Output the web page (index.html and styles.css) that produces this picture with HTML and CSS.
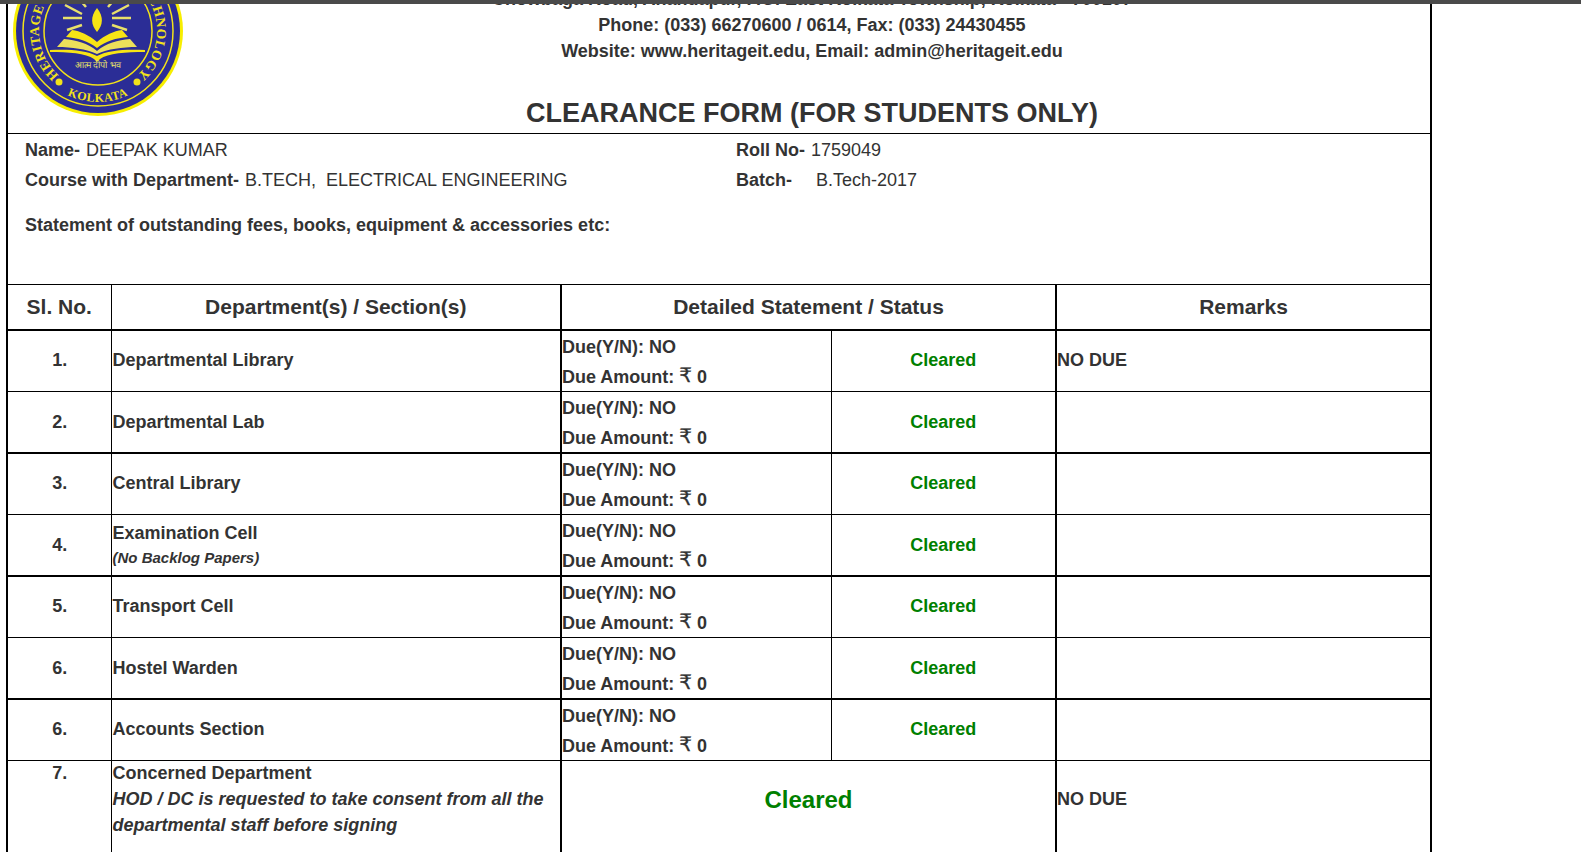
FILE: index.html
```html
<!DOCTYPE html>
<html lang="en">
<head>
  <meta charset="UTF-8">
  <title>Clearance Form</title>
  <link rel="stylesheet" href="styles.css">
</head>
<body>
  <div class="top-bar"></div>

  <div class="page">
    <!-- College header -->
    <div class="college-head">
      <svg class="logo" viewBox="0 0 172 172" width="172" height="172">
        <defs>
          <path id="ringTop" d="M 65.8 141.4 A 59 59 0 1 1 106.2 141.4"/>
          <path id="ringBottom" d="M 40.4 140.4 A 71 71 0 0 0 131.6 140.4"/>
        </defs>
        <circle cx="86" cy="86" r="85" fill="#f7ee00"/>
        <circle cx="86" cy="86" r="82" fill="#2b2d96"/>
        <circle cx="86" cy="86" r="75" fill="none" stroke="#f2e21a" stroke-width="1.5"/>
        <circle cx="86" cy="86" r="54" fill="none" stroke="#f2e21a" stroke-width="1.5"/>
        <text class="logo-ring"><textPath href="#ringTop" startOffset="50%" text-anchor="middle">HERITAGE INSTITUTE OF TECHNOLOGY</textPath></text>
        <text class="logo-city"><textPath href="#ringBottom" startOffset="50%" text-anchor="middle">KOLKATA</textPath></text>
        <circle cx="47" cy="137" r="3.5" fill="#f2e21a"/>
        <circle cx="125" cy="137" r="3.5" fill="#f2e21a"/>
        <path d="M85 63 C78 72 79 80 85 87 C91 80 92 72 85 63 Z" fill="#f7e415"/>
        <path d="M51 73 H70 M53 60 L70 69 M55 85 L70 80 M62 48 L74 62 M119 73 H100 M117 60 L100 69 M115 85 L100 80 M108 48 L96 62" stroke="#e8e06a" stroke-width="2.5"/>
        <path d="M85 97 C77 90 68 86 60 85 L54 92 C66 93 76 96 85 103 C94 96 104 93 116 92 L110 85 C102 86 93 90 85 97 Z" fill="#f7e415"/>
        <path d="M52 94 C64 95 76 98 85 106 C94 98 106 95 118 94 L125 102 C110 102 96 104 85 109 C74 104 60 102 45 102 Z" fill="#ece05a"/>
        <path d="M38 105 C56 104 74 105 85 111 C96 105 114 104 133 105 L133 107 C114 107 96 108 88 114 L85 117 L82 114 C74 108 56 107 38 107 Z" fill="#f7e415"/>
        <text class="logo-motto" x="86" y="123" text-anchor="middle">आत्म दीपो भव</text>
      </svg>
      <div class="college-text">
        <h1>HERITAGE INSTITUTE OF TECHNOLOGY</h1>
        <p>Chowbaga Road, Anandapur, P.O. East Kolkata Township, Kolkata - 700107</p>
        <p>Phone: (033) 66270600 / 0614, Fax: (033) 24430455</p>
        <p>Website: www.heritageit.edu, Email: admin@heritageit.edu</p>
        <h2>CLEARANCE FORM (FOR STUDENTS ONLY)</h2>
      </div>
    </div>

    <!-- Student details -->
    <div class="student-info">
      <div class="info-grid">
        <div><b>Name-</b> DEEPAK KUMAR</div>
        <div><b>Roll No-</b> 1759049</div>
        <div><b>Course with Department-</b> B.TECH, &nbsp;ELECTRICAL ENGINEERING</div>
        <div class="batch"><b>Batch-</b><span>B.Tech-2017</span></div>
      </div>
      <p class="statement">Statement of outstanding fees, books, equipment &amp; accessories etc:</p>
    </div>

    <table class="clearance">
      <colgroup>
        <col class="col-no"><col class="col-dept"><col class="col-due"><col class="col-status"><col class="col-remarks">
      </colgroup>
      <thead>
        <tr>
          <th>Sl. No.</th>
          <th>Department(s) / Section(s)</th>
          <th colspan="2">Detailed Statement / Status</th>
          <th>Remarks</th>
        </tr>
      </thead>
      <tbody>
        <tr>
          <td class="no">1.</td>
          <td>Departmental Library</td>
          <td class="due"><div class="due-lines">Due(Y/N): NO<br>Due Amount: <span class="rupee">₹</span> 0</div></td>
          <td class="status">Cleared</td>
          <td class="remark">NO DUE</td>
        </tr>
        <tr>
          <td class="no">2.</td>
          <td>Departmental Lab</td>
          <td class="due"><div class="due-lines">Due(Y/N): NO<br>Due Amount: <span class="rupee">₹</span> 0</div></td>
          <td class="status">Cleared</td>
          <td class="remark"></td>
        </tr>
        <tr>
          <td class="no">3.</td>
          <td>Central Library</td>
          <td class="due"><div class="due-lines">Due(Y/N): NO<br>Due Amount: <span class="rupee">₹</span> 0</div></td>
          <td class="status">Cleared</td>
          <td class="remark"></td>
        </tr>
        <tr>
          <td class="no">4.</td>
          <td class="with-note">Examination Cell<br><i class="note">(No Backlog Papers)</i></td>
          <td class="due"><div class="due-lines">Due(Y/N): NO<br>Due Amount: <span class="rupee">₹</span> 0</div></td>
          <td class="status">Cleared</td>
          <td class="remark"></td>
        </tr>
        <tr>
          <td class="no">5.</td>
          <td>Transport Cell</td>
          <td class="due"><div class="due-lines">Due(Y/N): NO<br>Due Amount: <span class="rupee">₹</span> 0</div></td>
          <td class="status">Cleared</td>
          <td class="remark"></td>
        </tr>
        <tr>
          <td class="no">6.</td>
          <td>Hostel Warden</td>
          <td class="due"><div class="due-lines">Due(Y/N): NO<br>Due Amount: <span class="rupee">₹</span> 0</div></td>
          <td class="status">Cleared</td>
          <td class="remark"></td>
        </tr>
        <tr>
          <td class="no">6.</td>
          <td>Accounts Section</td>
          <td class="due"><div class="due-lines">Due(Y/N): NO<br>Due Amount: <span class="rupee">₹</span> 0</div></td>
          <td class="status">Cleared</td>
          <td class="remark"></td>
        </tr>
        <tr class="last-row">
          <td class="no">7.</td>
          <td><span class="concerned">Concerned Department</span><i>HOD / DC is requested to take consent from all the departmental staff before signing</i></td>
          <td colspan="2" class="status-big">Cleared</td>
          <td class="remark remark-low">NO DUE</td>
        </tr>
      </tbody>
    </table>
  </div>
</body>
</html>
```

FILE: styles.css
```css
html, body {
  height: 100%;
  overflow: hidden;
}

body {
  margin: 0;
  font-family: "Liberation Sans", Arial, sans-serif;
  font-size: 18px;
  color: #333;
  background: #fff;
}

.top-bar {
  position: absolute;
  top: 0;
  left: 0;
  right: 0;
  height: 4px;
  background: #4a4a4a;
  z-index: 2;
}

.page {
  width: 1422px;
  margin: -60px 0 0 6px;
  border-left: 2px solid #000;
  border-right: 2px solid #000;
}

/* ===== header ===== */
.college-head {
  display: flex;
  border-bottom: 1px solid #000;
}

.logo {
  flex: none;
  margin: 5px 10px 0 4px;
  align-self: flex-start;
  overflow: hidden;
}

.logo-ring {
  font-family: "Liberation Serif", serif;
  font-size: 13.5px;
  font-weight: bold;
  fill: #f2e21a;
  letter-spacing: 0.4px;
}

.logo-city {
  font-family: "Liberation Serif", serif;
  font-size: 12px;
  font-weight: bold;
  fill: #f2e21a;
  letter-spacing: 0.5px;
}

.logo-motto {
  font-size: 9px;
  fill: #e8e06a;
}

.college-text {
  flex: 1;
  text-align: center;
  font-weight: bold;
  line-height: 26px;
}

.college-text h1 {
  margin: 0;
  font-size: 24px;
  line-height: 46px;
}

.college-text p {
  margin: 0;
}

.college-text h2 {
  margin: 31px 0 2px;
  font-size: 27px;
  line-height: 36px;
}

/* ===== student details ===== */
.student-info {
  height: 150px;
  padding-left: 17px;
  box-sizing: border-box;
  line-height: 30px;
}

.info-grid {
  display: grid;
  grid-template-columns: 711px 1fr;
  padding-top: 1px;
}

.info-grid b {
  margin-right: 1px;
}

.batch span {
  margin-left: 23px;
}

.statement {
  margin: 15px 0 0;
  font-weight: bold;
}

/* ===== table ===== */
.clearance {
  width: 1422px;
  table-layout: fixed;
  border-collapse: collapse;
}

.col-no { width: 103px; }
.col-dept { width: 450px; }
.col-due { width: 270px; }
.col-status { width: 225px; }
.col-remarks { width: 374px; }

.clearance th {
  height: 44px;
  padding: 0;
  font-size: 21px;
  border-top: 1px solid #000;
  border-bottom: 2px solid #000;
  border-left: 2px solid #000;
}

.clearance th:first-child {
  border-left: 0;
}

.clearance th:nth-child(2) {
  border-left-width: 1px;
}

.clearance td {
  height: 60px;
  padding: 0 0 0 1px;
  font-weight: bold;
  line-height: 26px;
  border-bottom: 1px solid #000;
  border-left: 2px solid #000;
}

/* odd rows sit a pixel higher than the even ones */
.clearance tbody tr:nth-child(odd) td {
  height: 58px;
  padding-bottom: 2px;
}

.clearance tbody tr:nth-child(even) td {
  border-bottom-width: 2px;
}

.clearance td:first-child {
  border-left: 0;
}

.clearance td:nth-child(2) {
  border-left-width: 1px;
}

.clearance td.no {
  text-align: center;
}

.clearance td.with-note {
  line-height: 24px;
}

.clearance td.due,
.clearance tbody tr:nth-child(odd) td.due {
  height: 60px;
  padding: 0;
}

.due-lines {
  margin: 2px 0 -1px;
  line-height: 29.5px;
}

.clearance td.status {
  padding-left: 0;
  text-align: center;
  color: #008000;
  border-left-width: 1px;
}

.clearance td.remark {
  padding-left: 0;
}

.rupee {
  font-family: "DejaVu Sans", sans-serif;
  font-size: 20px;
  font-weight: normal;
  line-height: 1;
  vertical-align: 1px;
  -webkit-text-stroke: 0.3px #333;
}

.note {
  font-size: 15px;
}

.clearance .last-row td {
  height: 120px;
  padding-bottom: 0;
  vertical-align: top;
  border-bottom: 0;
}

.clearance .last-row td.no {
  line-height: 24px;
}

.concerned {
  display: block;
  margin-bottom: 1px;
  line-height: 24px;
}

.clearance .last-row td.status-big {
  padding: 26px 0 0;
  font-size: 24px;
  text-align: center;
  color: #008000;
}

.clearance .last-row td.remark-low {
  padding-top: 25px;
}
```
